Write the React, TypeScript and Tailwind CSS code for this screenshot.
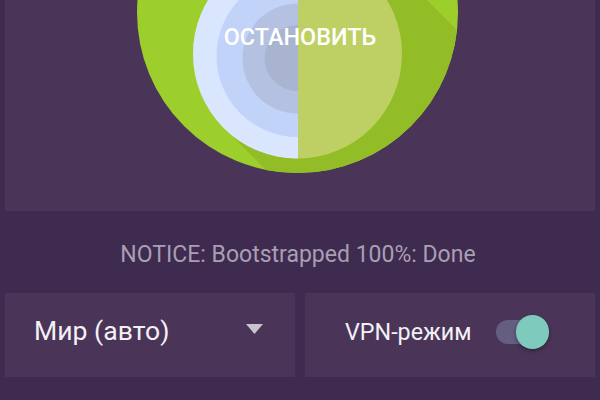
export default function App() {
  return (
    <div className="w-[600px] h-[400px] overflow-hidden bg-[#3f2a50] flex flex-col font-['Roboto',sans-serif]">
      <div className="relative mx-[5px] h-[211px] shrink-0 bg-[#4a3558] flex justify-center">
        <svg width="322" height="174" viewBox="137 0 322 174" className="mr-[5px] shrink-0">
          <defs>
            <clipPath id="outer"><circle cx="297.5" cy="12.5" r="160.5" /></clipPath>
            <clipPath id="left"><rect x="100" y="-10" width="198" height="200" /></clipPath>
          </defs>
          <circle cx="297.5" cy="12.5" r="160.5" fill="#9dcf2c" />
          <g clipPath="url(#outer)">
            <polygon points="224,128 290,194 480,194 480,53 427,0 427,-10 300,-10" fill="#93bd27" />
          </g>
          <circle cx="297.5" cy="54" r="104.5" fill="#bed064" />
          <g clipPath="url(#left)">
            <circle cx="297.5" cy="54" r="104.5" fill="#dae6fe" />
            <circle cx="297.5" cy="56" r="81" fill="#c2d3fa" />
            <circle cx="297.5" cy="58.5" r="55" fill="#b4c1e1" />
            <circle cx="297.5" cy="58" r="33" fill="#a9b4d1" />
          </g>
        </svg>
        <div className="absolute left-0 right-0 top-[23px] text-center text-white text-[23.4px] leading-[28px] font-medium">ОСТАНОВИТЬ</div>
      </div>
      <div className="h-[82px] shrink-0 flex items-center justify-center pt-[6px] pr-[4px] text-[23px] text-[#a99fb3]">NOTICE: Bootstrapped 100%: Done</div>
      <div className="flex gap-[10px] px-[5px]">
        <div className="w-[290px] h-[84px] bg-[#4a3558] flex items-center justify-between pl-[29px] pr-[32px]">
          <span className="text-[26.6px] text-[#f3f0f5] leading-[32px] pb-[8px]">Мир (авто)</span>
          <svg width="17" height="10" viewBox="0 0 17 10" className="mb-[12px]"><path d="M0 0H17L8.5 10Z" fill="#c9c2cf" /></svg>
        </div>
        <div className="w-[290px] h-[84px] bg-[#4a3558] flex items-center pl-[40px] pb-[6px]">
          <span className="text-[23.3px] text-[#f3f0f5]">VPN-режим</span>
          <div className="relative ml-[24px] w-[38px] h-[24px] rounded-full bg-[#645f80]">
            <div className="absolute left-[20px] top-[-5px] w-[33px] h-[34px] rounded-full bg-[#7ecabd] shadow-[0_2px_4px_rgba(0,0,0,0.35)]" />
          </div>
        </div>
      </div>
    </div>
  );
}
